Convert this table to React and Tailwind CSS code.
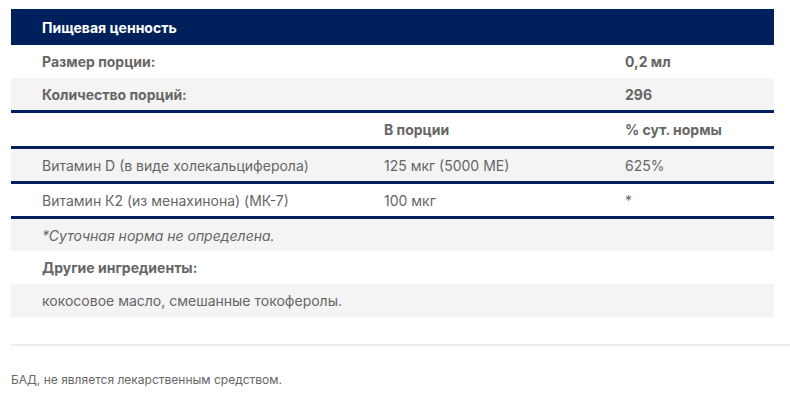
export default function App() {
  const font = { fontFamily: "Inter, 'Noto Sans', sans-serif" };
  const navy = "border-b-[3px] border-[#00205b]";
  return (
    <div className="w-[790px] h-[394px] bg-white overflow-hidden" style={font}>
      <div className="pt-[9px] pl-[11px] pr-[16px]">
        <div className="h-[36px] bg-[#00205b] flex items-center pl-[31px] text-white font-bold text-[14px]">
          Пищевая ценность
        </div>
        <div className="text-[14px] text-[#666666]">
          <div className="h-[33px] flex items-center pl-[31px] font-bold">
            <div className="w-[583px]">Размер порции:</div>
            <div>0,2 мл</div>
          </div>
          <div className={`h-[35px] flex items-center pl-[31px] font-bold bg-[#f4f4f4] ${navy}`}>
            <div className="w-[583px]">Количество порций:</div>
            <div>296</div>
          </div>
          <div className={`h-[36px] flex items-center pl-[31px] font-bold ${navy}`}>
            <div className="w-[342px]"></div>
            <div className="w-[241px]">В порции</div>
            <div>% сут. нормы</div>
          </div>
          <div className={`h-[35px] flex items-center pl-[31px] bg-[#f4f4f4] ${navy}`}>
            <div className="w-[342px]">Витамин D (в виде холекальциферола)</div>
            <div className="w-[241px]">125 мкг (5000 МЕ)</div>
            <div>625%</div>
          </div>
          <div className={`h-[35px] flex items-center pl-[31px] ${navy}`}>
            <div className="w-[342px]">Витамин К2 (из менахинона) (МК-7)</div>
            <div className="w-[241px]">100 мкг</div>
            <div>*</div>
          </div>
          <div className="h-[32px] flex items-center pl-[31px] bg-[#f4f4f4] italic">
            *Суточная норма не определена.
          </div>
          <div className="h-[33px] flex items-center pl-[31px] font-bold">
            Другие ингредиенты:
          </div>
          <div className="h-[33px] flex items-center pl-[31px] bg-[#f4f4f4]">
            кокосовое масло, смешанные токоферолы.
          </div>
        </div>
      </div>
      <div className="ml-[11px] mt-[27px] h-[2px] bg-[#ececec]"></div>
      <div className="pl-[11px] pt-[25px] text-[12px] text-[#666666]">
        БАД, не является лекарственным средством.
      </div>
    </div>
  );
}
